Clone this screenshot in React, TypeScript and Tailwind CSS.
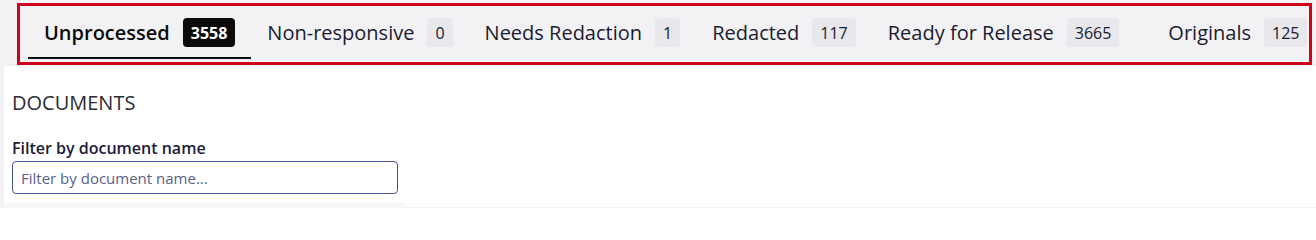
const tabs = [
  { label: 'Unprocessed', count: 3558, active: true },
  { label: 'Non-responsive', count: 0 },
  { label: 'Needs Redaction', count: 1 },
  { label: 'Redacted', count: 117 },
  { label: 'Ready for Release', count: 3665 },
  { label: 'Originals', count: 125, extra: true },
]

const App: React.FC = () => {
  return (
    <div
      className="h-[208px] w-[1316px] overflow-hidden bg-[#f2f2f5] pl-[4px] text-[#1b1b2e]"
      style={{ fontFamily: '"Open Sans", "Noto Sans", sans-serif' }}
    >
      {/* TABS */}
      <div className="pl-[13px] pr-[4px] pt-[3px]">
        <div className="h-[62px] overflow-hidden border-[3px] border-[#d0021b] bg-[#f2f2f5]">
          <div className="flex h-full items-stretch whitespace-nowrap pb-[3px] pl-[8px]">
            {tabs.map((t) => (
              <div
                key={t.label}
                className={`flex shrink-0 items-center gap-[13px] border-b-2 px-[16px] pt-[2px] ${
                  t.active ? 'border-[#0b0b0b]' : 'border-transparent'
                } ${t.extra ? 'ml-[17px]' : ''}`}
              >
                <span
                  className={`text-[20px] leading-none ${
                    t.active ? 'font-semibold text-[#0b0b0b]' : 'font-normal text-[#1b1b2e]'
                  }`}
                >
                  {t.label}
                </span>
                <span
                  className={`flex h-[29px] items-center rounded-[4px] px-[8px] text-[16px] ${
                    t.active
                      ? 'bg-[#0b0b0b] font-bold text-white'
                      : 'bg-[#e7e7ec] text-[#1b1b2e]'
                  }`}
                >
                  {t.count}
                </span>
              </div>
            ))}
          </div>
        </div>
      </div>

      {/* DOCUMENTS */}
      <div className="mt-[1px] h-[141px] bg-white">
        <div className="w-[401px] px-[8px] pt-[27px]">
          <h2 className="text-[20px] uppercase leading-none text-[#2b2b33]">
            Documents
          </h2>
          <label className="mt-[27px] block text-[16px] font-semibold leading-none text-[#1b1b3a]">
            Filter by document name
          </label>
          <input
            type="text"
            placeholder="Filter by document name..."
            className="mt-[5px] h-[33px] w-[386px] rounded-[4px] border border-[#4a4f9a] px-[8px] text-[15px] text-[#1b1b3a] placeholder:text-[#5b5f88] focus:outline-none"
          />
        </div>
        <div className="mt-[9px] h-[5px] w-[401px] bg-[#f7f7f8]" />
      </div>
    </div>
  )
}

export default App
